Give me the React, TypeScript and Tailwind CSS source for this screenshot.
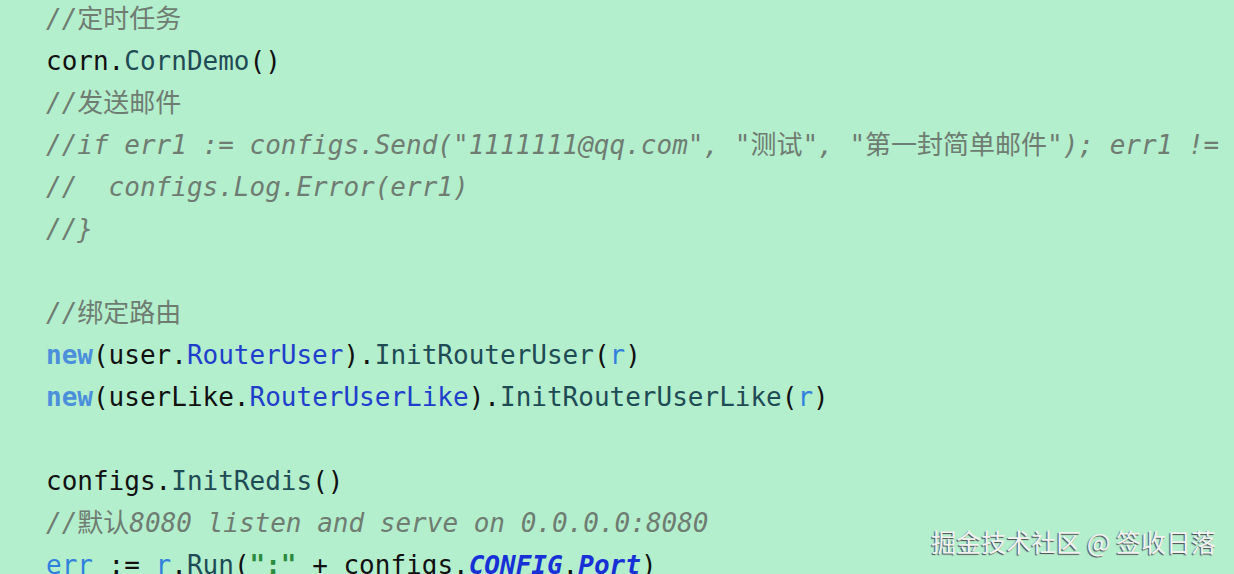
type Tok = { t: string; c?: string };

const lines: Tok[][] = [
  [{ t: "//定时任务", c: "cm" }],
  [{ t: "corn." }, { t: "CornDemo", c: "fn" }, { t: "()" }],
  [{ t: "//发送邮件", c: "cm" }],
  [{ t: '//if err1 := configs.Send("1111111@qq.com", "测试", "第一封简单邮件"); err1 != nil {', c: "cm" }],
  [{ t: "//  configs.Log.Error(err1)", c: "cm" }],
  [{ t: "//}", c: "cm" }],
  [],
  [{ t: "//绑定路由", c: "cm" }],
  [
    { t: "new", c: "kw" },
    { t: "(user." },
    { t: "RouterUser", c: "ty" },
    { t: ")." },
    { t: "InitRouterUser", c: "fn" },
    { t: "(" },
    { t: "r", c: "var" },
    { t: ")" },
  ],
  [
    { t: "new", c: "kw" },
    { t: "(userLike." },
    { t: "RouterUserLike", c: "ty" },
    { t: ")." },
    { t: "InitRouterUserLike", c: "fn" },
    { t: "(" },
    { t: "r", c: "var" },
    { t: ")" },
  ],
  [],
  [{ t: "configs." }, { t: "InitRedis", c: "fn" }, { t: "()" }],
  [{ t: "//默认8080 listen and serve on 0.0.0.0:8080", c: "cm" }],
  [
    { t: "err", c: "var" },
    { t: " := " },
    { t: "r", c: "var" },
    { t: "." },
    { t: "Run", c: "fn" },
    { t: "(" },
    { t: '":"', c: "str" },
    { t: " + configs." },
    { t: "CONFIG", c: "const" },
    { t: "." },
    { t: "Port", c: "const" },
    { t: ")" },
  ],
];

const styles: Record<string, string> = {
  cm: "text-[#6f7c71] italic",
  fn: "text-[#1f4b55]",
  kw: "text-[#4b8fdb] font-bold",
  ty: "text-[#1f3fcb]",
  var: "text-[#2f7fdc]",
  str: "text-[#2b8a3c] font-bold",
  const: "text-[#1731d6] font-bold italic",
};

// CJK glyphs stay upright inside italic comments
function Text({ t }: { t: string }) {
  const parts = t.split(/([\u4e00-\u9fff]+)/);
  return (
    <>
      {parts.map((p, k) =>
        /[\u4e00-\u9fff]/.test(p) ? (
          <span key={k} className="not-italic">
            {p}
          </span>
        ) : (
          p
        )
      )}
    </>
  );
}

export default function App() {
  return (
    <div className="relative w-[1234px] h-[574px] overflow-hidden bg-[#b3eecd]">
      <div
        className="-mt-[2px] pl-[46px] flex flex-col text-[26px] leading-[42px] text-[#111] whitespace-pre"
        style={{ fontFamily: '"DejaVu Sans Mono", "Noto Sans CJK SC", monospace' }}
      >
        {lines.map((toks, i) => (
          <div key={i} className="h-[42px]">
            {toks.map((tok, j) => (
              <span key={j} className={tok.c ? styles[tok.c] : ""}>
                <Text t={tok.t} />
              </span>
            ))}
          </div>
        ))}
      </div>
      <div
        className="absolute right-[18px] bottom-[18px] text-[25px] leading-[30px] text-[#f2f2f2] [text-shadow:-1px_1px_1px_#4a4a4a]"
        style={{ fontFamily: '"Noto Sans CJK SC", sans-serif' }}
      >
        掘金技术社区 @ 签收日落
      </div>
    </div>
  );
}
